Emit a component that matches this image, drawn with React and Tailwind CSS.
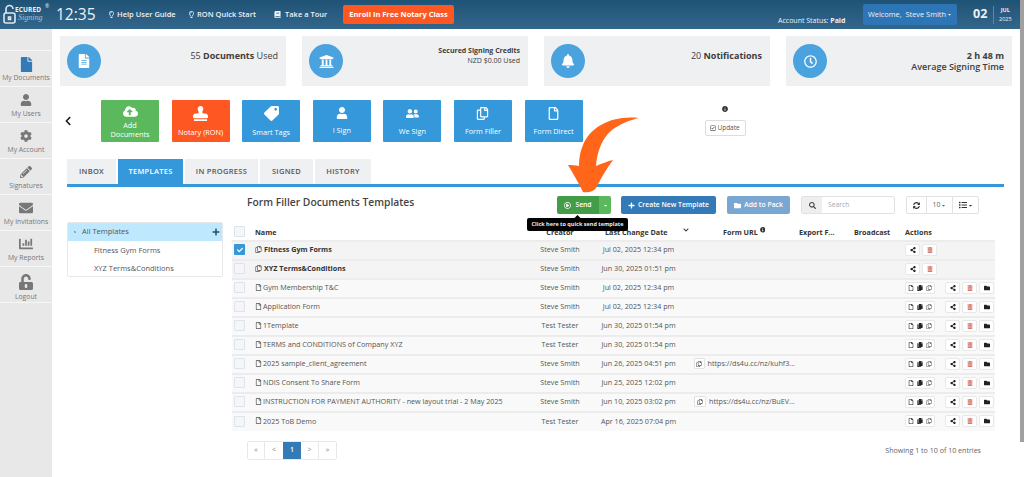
import { Fragment } from "react";
import {
    FaBell,
    FaBook,
    FaCaretDown,
    FaChartBar,
    FaCheck,
    FaChevronDown,
    FaChevronLeft,
    FaCloudUploadAlt,
    FaCog,
    FaCopy,
    FaEnvelope,
    FaFile,
    FaFileAlt,
    FaFolder,
    FaInfoCircle,
    FaList,
    FaPencilAlt,
    FaPlus,
    FaRegCheckSquare,
    FaRegClock,
    FaRegCopy,
    FaRegFile,
    FaRegLightbulb,
    FaRegPlayCircle,
    FaSearch,
    FaShareAlt,
    FaStamp,
    FaSyncAlt,
    FaTag,
    FaTrashAlt,
    FaUniversity,
    FaUnlockAlt,
    FaUser,
    FaUserFriends
} from "react-icons/fa";

const sideItems = [
    { label: "My Documents", icon: <FaFile className="text-[#337ab7] text-[15px]" /> },
    { label: "My Users", icon: <FaUser className="text-[12px]" /> },
    { label: "My Account", icon: <FaCog className="text-[12px]" /> },
    { label: "Signatures", icon: <FaPencilAlt className="text-[12px]" /> },
    { label: "My Invitations", icon: <FaEnvelope className="text-[14px]" /> },
    { label: "My Reports", icon: <FaChartBar className="text-[14px]" /> },
    { label: "Logout", icon: <FaUnlockAlt className="text-[16px]" />, tall: true }
];

const stats = [
    { icon: <FaFileAlt className="text-[14px]" />, top: <span className="block text-[9px] leading-[12px]">55 <b>Documents</b> Used</span> },
    {
        icon: <FaUniversity className="text-[15px]" />,
        top: <b className="text-[7px] leading-[8px] block">Secured Signing Credits</b>,
        sub: <span className="text-[7px] leading-[9px] block mt-[1px]">NZD $0.00 Used</span>
    },
    { icon: <FaBell className="text-[14px]" />, top: <span className="block text-[9px] leading-[12px]">20 <b>Notifications</b></span> },
    {
        icon: <FaRegClock className="text-[13px]" />,
        top: <b className="text-[9px] leading-[11px] block">2 h 48 m</b>,
        sub: <span className="text-[9px] font-semibold leading-[11px] block">Average Signing Time</span>
    }
];

const actions = [
    { label: "Add Documents", icon: <FaCloudUploadAlt className="text-[15px]" />, bg: "bg-[#5cb85c]" },
    { label: "Notary (RON)", icon: <FaStamp className="text-[15px]" />, bg: "bg-[#ff5722]" },
    { label: "Smart Tags", icon: <FaTag className="text-[15px] -scale-x-100" />, bg: "bg-[#3498db]" },
    { label: "I Sign", icon: <FaUser className="text-[12px]" />, bg: "bg-[#3498db]" },
    { label: "We Sign", icon: <FaUserFriends className="text-[13px]" />, bg: "bg-[#3498db]" },
    { label: "Form Filler", icon: <FaRegCopy className="text-[13px]" />, bg: "bg-[#3498db]" },
    { label: "Form Direct", icon: <FaRegFile className="text-[13px]" />, bg: "bg-[#3498db]" }
];

const tabs = [
    { label: "INBOX", w: "w-[49px]" },
    { label: "TEMPLATES", w: "w-[65px]", active: true },
    { label: "IN PROGRESS", w: "w-[73px]" },
    { label: "SIGNED", w: "w-[53px]" },
    { label: "HISTORY", w: "w-[56px]" }
];

const rows = [
    { name: "Fitness Gym Forms", creator: "Steve Smith", date: "Jul 02, 2025 12:34 pm", group: true, checked: true },
    { name: "XYZ Terms&Conditions", creator: "Steve Smith", date: "Jun 30, 2025 01:51 pm", group: true },
    { name: "Gym Membership T&C", creator: "Steve Smith", date: "Jul 02, 2025 12:34 pm" },
    { name: "Application Form", creator: "Steve Smith", date: "Jul 02, 2025 12:34 pm" },
    { name: "1Template", creator: "Test Tester", date: "Jun 30, 2025 01:54 pm" },
    { name: "TERMS and CONDITIONS of Company XYZ", creator: "Test Tester", date: "Jun 30, 2025 01:54 pm" },
    { name: "2025 sample_client_agreement", creator: "Steve Smith", date: "Jun 26, 2025 04:51 pm", url: "https://ds4u.cc/nz/kuhf3..." },
    { name: "NDIS Consent To Share Form", creator: "Steve Smith", date: "Jun 25, 2025 12:02 pm" },
    { name: "INSTRUCTION FOR PAYMENT AUTHORITY - new layout trial - 2 May 2025", creator: "Steve Smith", date: "Jun 10, 2025 03:02 pm", url: "https://ds4u.cc/nz/BuEV..." },
    { name: "2025 ToB Demo", creator: "Test Tester", date: "Apr 16, 2025 07:04 pm" }
];

function ActionBtn({ children, className = "" }) {
    return (
        <span className={`flex items-center justify-center w-[15px] h-[12px] bg-white border border-[#e8e8e8] rounded-[2px] text-[6px] text-[#222] ${className}`}>
            {children}
        </span>
    );
}

function App() {
    return (
        <div className="relative w-full h-screen overflow-hidden bg-white font-['Open_Sans',sans-serif] text-[#444]">
            <header className="flex items-center h-[29px] bg-gradient-to-b from-[#1f5375] to-[#33668b] text-[#eef2f5]">
                <div className="relative flex w-[56px] shrink-0 h-full">
                    <svg className="absolute left-[3px] top-[4px]" width="13" height="20" viewBox="0 0 13 20" fill="none" stroke="#dfe8ee" strokeWidth="1.6">
                        <path d="M3 9V5a3.5 3.5 0 0 1 7 0" />
                        <rect x="1" y="9" width="11" height="10" rx="2" />
                        <path d="M5.5 13h2v2.5h-2z" />
                    </svg>
                    <span className="absolute left-[15px] top-[5px] text-[6.5px] font-bold tracking-[0.1px]">ECURED</span>
                    <span className="absolute left-[45px] top-[3px] text-[5px]">®</span>
                    <span className="absolute left-[18px] top-[12px] text-[8px] italic font-['Liberation_Serif',serif] text-[#a9c3d4]">Signing</span>
                </div>
                <span className="w-[52px] text-[15.5px] leading-none">12:35</span>
                <span className="flex items-center gap-[2px] w-[80px] text-[7.5px] font-semibold"><FaRegLightbulb className="text-[7px]" />Help User Guide</span>
                <span className="flex items-center gap-[2px] w-[86px] text-[7.5px] font-semibold"><FaRegLightbulb className="text-[7px]" />RON Quick Start</span>
                <span className="flex items-center gap-[4px] w-[69px] text-[7.5px] font-semibold"><FaBook className="text-[7px]" />Take a Tour</span>
                <span className="flex items-center justify-center w-[111px] h-[19px] bg-[#ff5722] rounded-[2px] text-[7.5px] font-bold text-white">Enroll In Free Notary Class</span>
                <span className="ml-[324px] mt-[14px] w-[85px] text-[7px] whitespace-nowrap">Account Status: <b>Paid</b></span>
                <span className="flex items-center justify-center gap-[1px] w-[94px] h-[21px] bg-[#2e75b6] rounded-[2px] text-[7.4px] whitespace-nowrap">Welcome,&nbsp; Steve Smith<FaCaretDown className="text-[5px]" /></span>
                <span className="ml-[16px] w-[20px] text-[12.5px] font-bold">02</span>
                <span className="w-px h-[18px] bg-[#5e86a3]" />
                <span className="ml-[5px] flex flex-col items-center text-[5.5px] leading-[9px]"><b>JUL</b><span>2025</span></span>
            </header>

            <div className="flex h-[448px]">
                <aside className="w-[52px] shrink-0 bg-[#e8e8e8] pt-[21px]">
                    {sideItems.map((item) => (
                        <div key={item.label} className="flex flex-col items-center h-[36px] pt-[4px] border-t border-[#f6f6f6] text-[#777]">
                            <div className={`flex items-center justify-center ${item.tall ? "h-[21px]" : "h-[18px]"}`}>{item.icon}</div>
                            <span className="text-[6.8px] leading-[10px] whitespace-nowrap">{item.label}</span>
                        </div>
                    ))}
                    <div className="border-t border-[#f6f6f6]" />
                </aside>

                <main className="flex-1 pl-[8px] pt-[7px]">
                    <div className="flex gap-[16px] h-[50px]">
                        {stats.map((s, i) => (
                            <div key={i} className="flex w-[226px] bg-[#eff0f2] pl-[7px] pr-[8px] pt-[8px]">
                                <div className="flex items-center justify-center w-[34px] h-[34px] rounded-full bg-[#4aa3df] text-white shrink-0">
                                    {s.icon}
                                </div>
                                <div className={`flex-1 text-right text-[#3d3d3d] ${i === 1 ? "pt-[3px]" : "pt-[6px]"}`}>
                                    {s.top}
                                    {s.sub}
                                </div>
                            </div>
                        ))}
                    </div>

                    <div className="flex h-[42px] mt-[14px]">
                        <div className="flex items-center w-[41px] pl-[3px] text-[#222] text-[10px]"><FaChevronLeft /></div>
                        <div className="flex gap-[12.6px]">
                            {actions.map((a) => (
                                <div key={a.label} className={`flex flex-col items-center justify-center w-[58px] h-[42px] rounded-[1px] text-white text-[7.3px] leading-[8.5px] text-center ${a.bg}`}>
                                    {a.icon}
                                    <span className={a.label === "Add Documents" ? "mt-[2px] px-[8px]" : "mt-[7px]"}>{a.label}</span>
                                </div>
                            ))}
                        </div>
                        <div className="flex flex-col items-center ml-[122px] pt-[6px]">
                            <FaInfoCircle className="text-[6px] text-[#333]" />
                            <span className="flex items-center justify-center gap-[1px] mt-[8px] w-[41px] h-[16px] border border-[#ddd] rounded-[2px] text-[6.5px] text-[#555]"><FaRegCheckSquare className="text-[6px]" />Update</span>
                        </div>
                    </div>

                    <div className="flex gap-[2px] ml-[7px] mt-[17px] h-[25px]">
                        {tabs.map((t) => (
                            <div key={t.label} className={`flex items-center justify-center text-[7.5px] font-semibold tracking-[0.3px] ${t.w} ${t.active ? "bg-[#3498db] text-white" : "bg-[#eff0f2] text-[#555]"}`}>
                                {t.label}
                            </div>
                        ))}
                    </div>
                    <div className="ml-[7px] w-[937px] h-[3px] bg-[#3498db]" />

                    <div className="flex ml-[7px] mt-[9px]">
                        <div className="w-[156px] shrink-0 mt-[26px] mr-[9px]">
                            <div className="border border-[#e8e8e8] rounded-[2px] h-[55px] text-[7.5px] text-[#555]">
                                <div className="flex items-center justify-between h-[18px] bg-[#bde8fd] pl-[5px] pr-[2px]">
                                    <span className="flex items-center gap-[5px]"><FaCaretDown className="text-[4px] rotate-45" />All Templates</span>
                                    <FaPlus className="text-[8px] text-[#1f4e6e]" />
                                </div>
                                <div className="pl-[26px] leading-[18px]">Fitness Gym Forms</div>
                                <div className="pl-[26px] leading-[18px]">XYZ Terms&amp;Conditions</div>
                            </div>
                        </div>

                        <div className="w-[763px]">
                            <div className="flex h-[18px] text-[6.8px]">
                                <div className="w-[325px] pl-[15px] text-[10.3px] font-semibold text-[#444] leading-[12px]">Form Filler Documents Templates</div>
                                <div className="flex w-[54px] rounded-[2px] overflow-hidden text-white font-semibold">
                                    <span className="flex items-center justify-center gap-[4px] w-[42px] bg-[#439c48]"><FaRegPlayCircle className="text-[7px]" />Send</span>
                                    <span className="flex items-center justify-center w-[12px] bg-[#5cb85c] text-[5px]"><FaCaretDown /></span>
                                </div>
                                <span className="flex items-center justify-center gap-[3px] ml-[10px] w-[95px] bg-[#337ab7] rounded-[2px] text-white font-semibold"><FaPlus className="text-[7px]" />Create New Template</span>
                                <span className="flex items-center justify-center gap-[3px] ml-[11px] w-[63px] bg-[#7aa7d1] rounded-[2px] text-white font-semibold"><FaFolder className="text-[7px]" />Add to Pack</span>
                                <div className="flex ml-[11px] w-[94px] border border-[#e2e2e2] rounded-[2px]">
                                    <span className="flex items-center justify-center w-[20px] bg-[#eeeeee] text-[#444] text-[7px]"><FaSearch /></span>
                                    <span className="flex items-center pl-[6px] text-[#aaa]">Search</span>
                                </div>
                                <div className="flex ml-[11px] w-[73px] border border-[#e2e2e2] rounded-[2px] text-[#333]">
                                    <span className="flex items-center justify-center w-[20px] text-[7px] border-r border-[#e2e2e2]"><FaSyncAlt /></span>
                                    <span className="flex items-center justify-center gap-[1px] w-[26px] border-r border-[#e2e2e2] text-[#666]">10<FaCaretDown className="text-[5px]" /></span>
                                    <span className="flex items-center justify-center gap-[1px] flex-1 text-[8px]"><FaList /><FaCaretDown className="text-[5px]" /></span>
                                </div>
                            </div>

                            <table className="mt-[8px] w-[763px] table-fixed border-collapse text-[7.2px]">
                                <colgroup>
                                    <col className="w-[23px]" />
                                    <col className="w-[265px]" />
                                    <col className="w-[80px]" />
                                    <col className="w-[92px]" />
                                    <col className="w-[103px]" />
                                    <col className="w-[55px]" />
                                    <col className="w-[51px]" />
                                    <col className="w-[94px]" />
                                </colgroup>
                                <thead>
                                    <tr className="h-[19px] text-left font-bold text-[#333] [&>th]:pt-[2px]">
                                        <th className="pl-[2px]"><span className="block w-[11px] h-[11px] bg-[#f4f7fa] border border-[#dde3e8] rounded-[1px] -mt-[2px]" /></th>
                                        <th className="font-bold">Name</th>
                                        <th className="font-bold text-center">Creator</th>
                                        <th className="font-bold pl-[5px] whitespace-nowrap">
                                            <span className="flex items-center">Last Change Date<FaChevronDown className="ml-[15px] text-[6px] -mt-[3px]" /></span>
                                        </th>
                                        <th className="font-bold pl-[31px]">
                                            <span className="flex items-center gap-[2px] whitespace-nowrap">Form URL<FaInfoCircle className="text-[5.5px] -mt-[4px]" /></span>
                                        </th>
                                        <th className="font-bold pl-[4px] whitespace-nowrap">Export F...</th>
                                        <th className="font-bold pl-[4px]">Broadcast</th>
                                        <th className="font-bold pl-[4px]">Actions</th>
                                    </tr>
                                </thead>
                                <tbody>
                                    {rows.map((r) => (
                                        <tr key={r.name} className={`h-[19px] border-t-2 border-[#ececec] text-[#555] [&>td]:pb-[2px] ${r.group ? "bg-[#f4f4f4]" : "bg-[#f9f9f9]"}`}>
                                            <td className="pl-[2px]">
                                                {r.checked ? (
                                                    <span className="flex items-center justify-center w-[11px] h-[11px] bg-[#3498db] rounded-[1px] text-white text-[6px]"><FaCheck /></span>
                                                ) : (
                                                    <span className="block w-[11px] h-[11px] bg-[#f4f7fa] border border-[#dde3e8] rounded-[1px]" />
                                                )}
                                            </td>
                                            <td className="whitespace-nowrap">
                                                <span className="flex items-center gap-[1px]">
                                                    {r.group ? <FaRegCopy className="text-[7px] mr-[1px]" /> : <FaRegFile className="text-[7px]" />}
                                                    {r.group ? <b className="text-[#333]">{r.name}</b> : r.name}
                                                </span>
                                            </td>
                                            <td className="text-center whitespace-nowrap">{r.creator}</td>
                                            <td className="text-center pr-[15px] whitespace-nowrap">{r.date}</td>
                                            <td className="pl-[2px] whitespace-nowrap">
                                                {r.url && (
                                                    <span className="flex items-center gap-[3px]">
                                                        <span className="flex items-center justify-center w-[12px] h-[11px] border border-[#e2e2e2] rounded-[1px] bg-white text-[6px]"><FaRegCopy /></span>
                                                        {r.url}
                                                    </span>
                                                )}
                                            </td>
                                            <td />
                                            <td />
                                            <td className="pl-[4px]">
                                                <div className="flex gap-[2px]">
                                                    {!r.group && (
                                                        <Fragment>
                                                            <span className="flex items-center w-[30px] h-[12px] bg-white border border-[#e8e8e8] rounded-[2px] text-[6px] text-[#222] justify-around mr-[8px]">
                                                                <FaRegFile />
                                                                <FaCopy />
                                                                <FaRegCopy className="text-[#666]" />
                                                            </span>
                                                        </Fragment>
                                                    )}
                                                    <ActionBtn><FaShareAlt /></ActionBtn>
                                                    <ActionBtn className="!text-[#d9746c]"><FaTrashAlt /></ActionBtn>
                                                    {!r.group && <ActionBtn><FaFolder /></ActionBtn>}
                                                </div>
                                            </td>
                                        </tr>
                                    ))}
                                </tbody>
                            </table>

                            <div className="flex items-center justify-between mt-[10px] pl-[15px] pr-[14px]">
                                <div className="flex h-[19px] border border-[#e8e8e8] rounded-[2px] text-[7px] text-[#888]">
                                    <span className="flex items-center justify-center w-[17px] border-r border-[#e8e8e8]">«</span>
                                    <span className="flex items-center justify-center w-[18px]">&lt;</span>
                                    <span className="flex items-center justify-center w-[18px] bg-[#337ab7] text-white font-semibold">1</span>
                                    <span className="flex items-center justify-center w-[18px] border-r border-[#e8e8e8]">&gt;</span>
                                    <span className="flex items-center justify-center w-[17px]">»</span>
                                </div>
                                <span className="text-[7.1px] text-[#666]">Showing 1 to 10 of 10 entries</span>
                            </div>
                        </div>
                    </div>
                </main>
            </div>

            {/* tooltip under the send button */}
            <div className="absolute left-[527px] top-[218px] flex items-center justify-center w-[101px] h-[13px] bg-black rounded-[2px] text-[5.5px] font-bold text-[#eee] whitespace-nowrap">
                Click here to quick send template
                <span className="absolute left-[48px] -top-[2px] w-[5px] h-[5px] bg-black rotate-45" />
            </div>

            {/* orange arrow */}
            <svg className="absolute left-[560px] top-[110px]" width="90" height="90" viewBox="560 110 90 90">
                <path d="M639 118 C612 115 590 127 583 145 C580 152 579 158 579 166 C575 165 571 165 568 165 C574 175 579 184 583 192 C589 193 594 191 596 188 C601 178 607 168 613 160 C608 161 601 164 596 166 C597 152 602 138 612 130 C620 124 630 120 639 118 Z" fill="#ff661a" />
            </svg>

            {/* page scrollbar */}
            <div className="absolute right-0 top-0 w-[4px] h-[442px] bg-[#a0a0a0]" />
        </div>
    );
}

export default App;
